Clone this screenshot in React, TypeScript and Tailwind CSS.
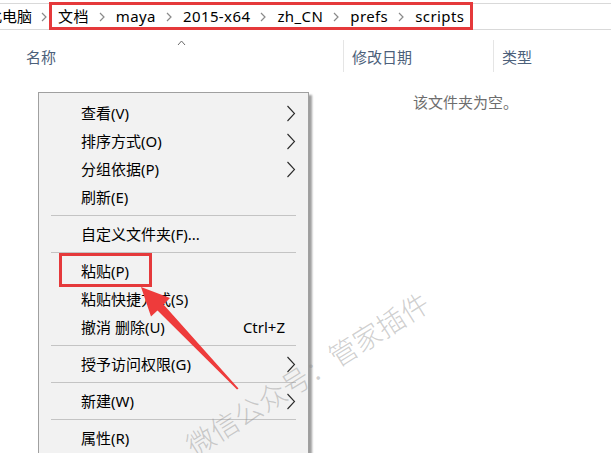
import React from "react";

const Crumb = () => (
  <svg width="6" height="10" viewBox="0 0 6 10" className="shrink-0">
    <path d="M1 1 L5 5 L1 9" fill="none" stroke="#8a8a8a" strokeWidth="1.2" />
  </svg>
);

const SubArrow = () => (
  <svg width="10" height="17" viewBox="0 0 10 17" className="shrink-0">
    <path d="M1.5 1 L8.5 8.5 L1.5 16" fill="none" stroke="#2b2b2b" strokeWidth="1.1" />
  </svg>
);

type Item = { label: string; sub?: boolean; shortcut?: string } | "sep";

const items: Item[] = [
  { label: "查看(V)", sub: true },
  { label: "排序方式(O)", sub: true },
  { label: "分组依据(P)", sub: true },
  { label: "刷新(E)" },
  "sep",
  { label: "自定义文件夹(F)..." },
  "sep",
  { label: "粘贴(P)" },
  { label: "粘贴快捷方式(S)" },
  { label: "撤消 删除(U)", shortcut: "Ctrl+Z" },
  "sep",
  { label: "授予访问权限(G)", sub: true },
  "sep",
  { label: "新建(W)", sub: true },
  "sep",
  { label: "属性(R)" },
];

export default function App() {
  const crumbs = ["文档", "maya", "2015-x64", "zh_CN", "prefs", "scripts"];
  return (
    <div className="relative w-[611px] h-[453px] overflow-hidden bg-white font-['Noto_Sans','Noto_Sans_CJK_SC',sans-serif] text-[15px] text-black">
      {/* address bar */}
      <div className="mt-[3px] h-[27px] border-y border-[#d9d9d9] flex items-center">
        <div className="flex items-center -ml-[13px]">
          <span className="leading-none">此电脑</span>
          <span className="ml-[9px] mr-[11px]"><Crumb /></span>
          {crumbs.map((c, i) => (
            <React.Fragment key={c}>
              <span className="leading-none tracking-[0.4px]">{c}</span>
              {i < crumbs.length - 1 && (
                <span className="ml-[10px] mr-[11px]"><Crumb /></span>
              )}
            </React.Fragment>
          ))}
        </div>
      </div>

      {/* header */}
      <div className="mt-[10px] h-[32px] flex text-[#4c607a]">
        <div className="relative w-[344px] border-r border-[#e5e5e5] pl-[26px] flex items-center pt-[2px]">
          名称
          <svg width="9" height="6" viewBox="0 0 9 6" className="absolute left-[177px] top-[0px]">
            <path d="M1 5 L4.5 1 L8 5" fill="none" stroke="#6b6b6b" strokeWidth="1" />
          </svg>
        </div>
        <div className="w-[150px] border-r border-[#e5e5e5] pl-[8px] flex items-center pt-[2px]">修改日期</div>
        <div className="pl-[8px] flex items-center pt-[2px]">类型</div>
      </div>

      {/* empty message */}
      <div className="mt-[20px] pl-[413px] text-[#6d6d6d] leading-[20px]">该文件夹为空。</div>

      {/* context menu */}
      <div className="absolute left-[38px] top-[92px] w-[271px] h-[380px] bg-[#f2f2f2] border border-[#a0a0a0] shadow-[3px_3px_2px_rgba(0,0,0,0.38)] pt-[6px]">
        {items.map((it, i) =>
          it === "sep" ? (
            <div key={i} className="h-[9px] flex items-center px-[12px]">
              <div className="h-px w-full bg-[#c4c4c4]" />
            </div>
          ) : (
            <div key={i} className="h-[28px] flex items-center pl-[42px] pr-[12px]">
              <span className="flex-1 leading-none">{it.label}</span>
              {it.shortcut && <span className="leading-none mr-[11px]">{it.shortcut}</span>}
              {it.sub && <SubArrow />}
            </div>
          )
        )}
      </div>

      {/* annotation boxes */}
      <div className="absolute left-[49px] top-[2px] w-[424px] h-[28px] border-[3px] border-[#e5393b]" />
      <div className="absolute left-[59px] top-[253px] w-[93px] h-[34px] border-[3px] border-[#e5393b]" />

      {/* arrow */}
      <svg className="absolute left-0 top-0" width="611" height="453" viewBox="0 0 611 453">
        <polygon
          points="141,287 170,298 163.5,304.5 238.5,388.5 237,389.5 157.5,310.5 151,316.5"
          fill="#ee3b3b"
        />
      </svg>

      {/* watermark */}
      <div className="absolute left-[165px] top-[355px] w-[284px] text-center text-[28px] leading-[36px] text-[rgba(140,140,140,0.42)] -rotate-[32deg] whitespace-nowrap font-['Noto_Sans_CJK_SC',sans-serif] font-light">
        微信公众号：管家插件
      </div>
    </div>
  );
}
